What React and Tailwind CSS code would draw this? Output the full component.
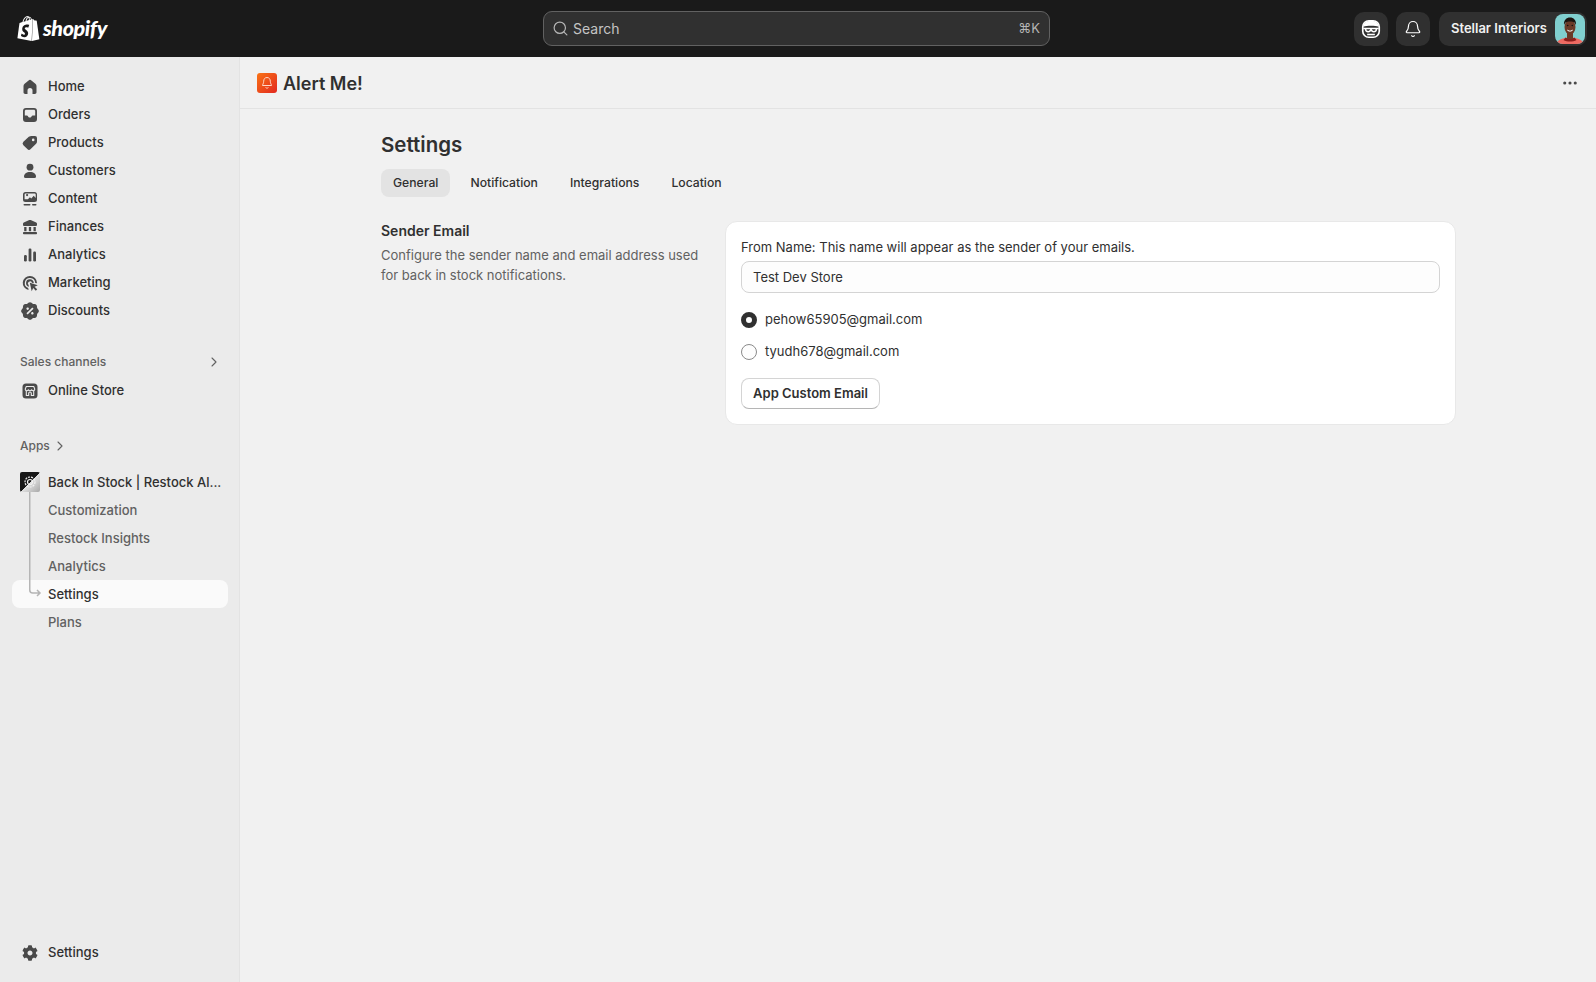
import React from "react";
import { Search, Bell, ChevronRight, MoreHorizontal } from "lucide-react";
import { FaCog } from "react-icons/fa";
import { RiDiscountPercentFill } from "react-icons/ri";

const I = ({ children, size = 20 }) => (
  <svg width={size} height={size} viewBox="0 0 20 20" fill="#4a4a4a" fillRule="evenodd">{children}</svg>
);

const icons = {
  Home: <I><path d="M8.6 3.4 4.6 6.7C3.9 7.3 3.5 8 3.5 8.9v6.4c0 1 .8 1.7 1.7 1.7h2.3v-3.5a2.5 2.5 0 0 1 5 0V17h2.3c1 0 1.7-.8 1.7-1.7V8.9c0-.9-.4-1.6-1.1-2.2l-4-3.3a2.2 2.2 0 0 0-2.8 0Z" /></I>,
  Orders: <I><path d="M6 3h8a3 3 0 0 1 3 3v8a3 3 0 0 1-3 3H6a3 3 0 0 1-3-3V6a3 3 0 0 1 3-3Zm-1.2 7.5v-4.3C4.8 5.4 5.4 4.8 6.2 4.8h7.6c.8 0 1.4.6 1.4 1.4v4.3h-2.4c-.6 0-1 .3-1.2.8l-.2.4c-.2.4-.6.7-1.1.7h-1c-.5 0-.9-.3-1.1-.7l-.2-.4c-.2-.5-.6-.8-1.2-.8H4.8Z" /></I>,
  Products: <I><path d="M11.4 3H15a2 2 0 0 1 2 2v3.6c0 .8-.3 1.6-.9 2.1l-5.4 5.4a2.4 2.4 0 0 1-3.4 0l-3.9-3.9a2.4 2.4 0 0 1 0-3.4l5.4-5C9.8 3.3 10.6 3 11.4 3Zm1.8 5.2a1.3 1.3 0 1 0 0-2.6 1.3 1.3 0 0 0 0 2.6Z" /></I>,
  Customers: <I><circle cx="10" cy="6.2" r="3.4" /><path d="M4 15.5c0-2.6 2.4-4.5 6-4.5s6 1.900 6 4.500a1.500 1.500 0 0 1-1.500 1.500h-9A1.500 1.500 0 0 1 4 15.500Z" /></I>,
  Content: <I><path d="M5.500 3h9A2.500 2.500 0 0 1 17 5.500v5a2.500 2.500 0 0 1-2.500 2.500h-9A2.500 2.500 0 0 1 3 10.500v-5A2.500 2.500 0 0 1 5.500 3Zm-.900 7.300h3.300l2-2.100 1.400 1.200 2.400-2.700 2 2.200V5.500c0-.5-.4-.9-.9-.9H5.500c-.5 0-.9.400-.9.900v4.800Zm2.500-3.100a1.100 1.100 0 1 0 0-2.200 1.100 1.100 0 0 0 0 2.200Z" /><rect x="3.500" y="15" width="7" height="1.600" rx=".8" /><rect x="12" y="15" width="4.500" height="1.600" rx=".8" /></I>,
  Finances: <I><path d="M9.300 3.100a1.800 1.800 0 0 1 1.400 0l5.500 2.500c.5.200.8.700.8 1.200V8a1 1 0 0 1-1 1H4a1 1 0 0 1-1-1V6.800c0-.5.300-1 .8-1.200l5.500-2.500Z" /><rect x="4.200" y="10" width="2.300" height="4.200" /><rect x="8.850" y="10" width="2.300" height="4.200" /><rect x="13.500" y="10" width="2.300" height="4.200" /><rect x="3" y="15" width="14" height="2.200" rx=".8" /></I>,
  Analytics: <I><rect x="4" y="10" width="2.800" height="6.500" rx="1.200" /><rect x="8.600" y="3.500" width="2.800" height="13" rx="1.200" /><rect x="13.200" y="6.500" width="2.800" height="10" rx="1.200" /></I>,
  Marketing: <I><path d="M10 3a7 7 0 0 0-1.400 13.900l-.4-1.800A5.200 5.200 0 1 1 15.200 10l1.800.300V10a7 7 0 0 0-7-7Z" /><path d="M10 6.200a3.800 3.800 0 0 0-1 7.500l-.5-1.900a2 2 0 1 1 3.400-2l1.900.5A3.800 3.800 0 0 0 10 6.200Z" /><path d="m9.800 9.800 8 2.400-3.200 1.500 2.600 2.600-1.400 1.400-2.600-2.600-1.500 3.200-1.900-8.500Z" /></I>,
  Discounts: <RiDiscountPercentFill size={20} color="#4a4a4a" />,
  "Online Store": (
    <svg width="20" height="20" viewBox="0 0 20 20" fill="none">
      <rect x="2.500" y="2.500" width="15" height="15" rx="3.500" fill="#4a4a4a" />
      <path d="M6.300 5.500h7.400l1.100 2.600c0 1-.7 1.700-1.600 1.700-.7 0-1.300-.4-1.600-1-.3.600-.9 1-1.600 1s-1.300-.4-1.600-1c-.3.600-.9 1-1.600 1-.9 0-1.600-.7-1.600-1.700l1.100-2.600Z" stroke="#ebebeb" strokeWidth="1.100" strokeLinejoin="round" />
      <path d="M6.300 10v4.500h2.400V12.300a1.300 1.300 0 0 1 2.600 0v2.200h2.400V10" stroke="#ebebeb" strokeWidth="1.100" strokeLinejoin="round" />
    </svg>
  ),
};

const mainNav = ["Home", "Orders", "Products", "Customers", "Content", "Finances", "Analytics", "Marketing", "Discounts"];
const subNav = ["Customization", "Restock Insights", "Analytics", "Settings", "Plans"];

function Row({ icon, label }) {
  return (
    <div className="h-[28px] pl-[20px] flex items-center">
      <span className="w-[20px] h-[20px] flex items-center justify-center shrink-0">{icon}</span>
      <span className="ml-[8px] text-[13px] font-[500] text-[#303030]">{label}</span>
    </div>
  );
}

function Shopify() {
  return (
    <div className="flex items-center pl-[16px] -mt-[1px]">
      <svg width="25" height="27" viewBox="0 0 24 24" fill="#ffffff">
        <path d="M15.337 23.979l7.216-1.561s-2.604-17.613-2.625-17.73c-.018-.116-.114-.192-.211-.192s-1.929-.136-1.929-.136-1.275-1.274-1.439-1.411c-.045-.037-.075-.057-.121-.074l-.914 21.104h.023zM11.71 11.305s-.81-.424-1.774-.424c-1.447 0-1.504.906-1.504 1.141 0 1.232 3.24 1.715 3.24 4.629 0 2.295-1.44 3.76-3.406 3.76-2.354 0-3.54-1.465-3.54-1.465l.646-2.086s1.245 1.066 2.28 1.066c.675 0 .975-.545.975-.932 0-1.619-2.654-1.694-2.654-4.359-.034-2.237 1.571-4.416 4.827-4.416 1.257 0 1.875.361 1.875.361l-.945 2.715-.02.01zM11.17.83c.136 0 .271.038.405.135-.984.465-2.064 1.639-2.508 3.992-.656.213-1.293.405-1.889.578C7.697 3.75 8.951.84 11.17.84V.83zm1.235 2.949v.135c-.754.232-1.583.484-2.394.736.466-1.777 1.333-2.645 2.085-2.971.193.501.309 1.176.309 2.1zm.539-2.234c.694.074 1.141.867 1.429 1.755-.349.114-.735.231-1.158.366v-.252c0-.752-.096-1.371-.271-1.871v.002zm2.992 1.289c-.02 0-.06.021-.078.021s-.289.075-.714.21c-.423-1.233-1.176-2.37-2.508-2.37h-.115C12.135.209 11.669 0 11.265 0 8.159 0 6.675 3.877 6.21 5.846c-1.194.365-2.063.636-2.16.674-.675.213-.694.232-.772.87-.075.462-1.83 14.063-1.83 14.063L15.009 24l.927-21.166z" />
      </svg>
      <span className="ml-[2px] text-[21.500px] font-black italic text-white tracking-[-0.4px] [font-family:Lato,sans-serif]">shopify</span>
    </div>
  );
}

function FaceIcon() {
  return (
    <svg width="22" height="22" viewBox="0 0 20 20" fill="none">
      <rect x="2.500" y="2.500" width="15" height="15" rx="5.500" stroke="#fff" strokeWidth="1.500" />
      <path d="M3 8C3 4.500 6 2.500 10 2.500S17 4.500 17 8c-2-.8-4-1-7-1s-5 .2-7 1Z" fill="#fff" />
      <path d="M3 9.500h14M5 9.500c0 2 1.200 3 2.500 3s2-1 2.500-2c.5 1 1.200 2 2.500 2s2.500-1 2.500-3" stroke="#fff" strokeWidth="1.400" />
      <path d="M6.500 15h7" stroke="#fff" strokeWidth="1.400" />
    </svg>
  );
}

function Avatar() {
  return (
    <svg width="30" height="30" viewBox="0 0 30 30" className="rounded-[8px] shrink-0">
      <rect width="30" height="30" fill="#80cfcf" />
      <path d="M1 30c1-4 7-6.500 14-6.500S28 26 29 30Z" fill="#ee6a62" />
      <path d="M10.500 23.500c2 1.500 7 1.500 9 0l2 2.500c-3.500 2-9.500 2-13 0Z" fill="#8c1e1c" />
      <rect x="12" y="19" width="6" height="6" fill="#6b3a28" />
      <ellipse cx="15" cy="13" rx="5.500" ry="7.500" fill="#6b3a28" />
      <path d="M9 11c-.5-5 2.500-7.500 6-7.500s6.500 2.500 6 7.500c-1-2.500-2-3.500-6-3.500s-5 1-6 3.500Z" fill="#1a1410" />
      <path d="M12 15.500c2 1.500 4 1.500 6 0-.4 2.800-5.600 2.800-6 0Z" fill="#fff" />
      <circle cx="12.700" cy="11.500" r=".8" fill="#111" />
      <circle cx="17.300" cy="11.500" r=".8" fill="#111" />
    </svg>
  );
}

function Radio({ checked, label }) {
  return (
    <div className="h-[32px] flex items-center">
      <span className={checked ? "w-[16px] h-[16px] rounded-full border-[5px] border-[#303030] bg-white" : "w-[16px] h-[16px] rounded-full border border-[#8a8a8a] bg-[#fdfdfd]"} />
      <span className="ml-[8px] text-[13px] text-[#303030]">{label}</span>
    </div>
  );
}

export default function App() {
  return (
    <div className="h-[982px] w-full flex flex-col overflow-hidden bg-[#f1f1f1] [font-family:Inter,sans-serif]">
      <header className="h-[57px] bg-[#1a1a1a] flex items-center shrink-0">
        <div className="w-[543px]"><Shopify /></div>
        <div className="w-[507px] h-[35px] bg-[#303030] border border-[#616161] rounded-[9px] flex items-center pl-[8px] pr-[9px]">
          <Search size={17} color="#b5b5b5" strokeWidth={1.7} />
          <span className="ml-[4px] text-[14px] text-[#c4c4c4]">Search</span>
          <span className="ml-auto text-[13px] text-[#b5b5b5]">⌘K</span>
        </div>
        <div className="flex-1 flex items-center justify-end pr-[9px]">
          <div className="w-[34px] h-[34px] rounded-[10px] bg-[#303030] flex items-center justify-center"><FaceIcon /></div>
          <div className="ml-[8px] w-[34px] h-[34px] rounded-[10px] bg-[#303030] flex items-center justify-center"><Bell size={18} color="#fff" strokeWidth={1.6} /></div>
          <div className="ml-[9px] h-[34px] w-[148px] rounded-[10px] bg-[#303030] flex items-center pl-[12px] pr-[2px] justify-between">
            <span className="text-[13px] font-semibold text-[#f1f1f1] whitespace-nowrap">Stellar Interiors</span>
            <Avatar />
          </div>
        </div>
      </header>

      <div className="flex-1 flex min-h-0">
        <aside className="w-[240px] shrink-0 bg-[#ebebeb] border-r border-[#e3e3e3] flex flex-col justify-between pt-[16px] pb-[15px]">
          <div>
            {mainNav.map((n) => <Row key={n} label={n} icon={icons[n]} />)}
            <div className="mt-[23px] h-[28px] pl-[20px] pr-[17px] flex items-center justify-between">
              <span className="text-[12px] font-[500] text-[#616161]">Sales channels</span>
              <ChevronRight size={16} color="#616161" strokeWidth={1.6} />
            </div>
            <div className="mt-[1px]"><Row label="Online Store" icon={icons["Online Store"]} /></div>
            <div className="mt-[27px] h-[28px] pl-[20px] flex items-center">
              <span className="text-[12px] font-[500] text-[#616161]">Apps</span>
              <ChevronRight size={16} color="#616161" strokeWidth={1.6} className="ml-[2px]" />
            </div>
            <div className="mt-[8px] relative">
              <div className="h-[28px] pl-[20px] flex items-center">
                <span className="w-[20px] h-[20px] rounded-[2px] bg-[linear-gradient(135deg,#161616_50%,#e2e2e2_50%,#a8a8a8)] flex items-center justify-center shrink-0">
                  <svg width="14" height="14" viewBox="0 0 14 14" fill="none" stroke="#f1f1f1" strokeWidth="1.200"><circle cx="7" cy="7" r="5" strokeDasharray="2 1" /><circle cx="7" cy="7" r="2.500" /></svg>
                </span>
                <span className="ml-[8px] pt-[1px] text-[13px] font-[500] text-[#303030] whitespace-nowrap">Back In Stock | Restock Al...</span>
              </div>
              {subNav.map((n) => (
                <div key={n} className={n === "Settings" ? "h-[28px] ml-[12px] mr-[11px] pl-[36px] pt-[1px] rounded-[8px] bg-[#fafafa] flex items-center" : "h-[28px] ml-[12px] mr-[11px] pl-[36px] pt-[1px] flex items-center"}>
                  <span className={n === "Settings" ? "text-[13px] font-[500] text-[#303030]" : "text-[13px] font-[450] text-[#616161]"}>{n}</span>
                </div>
              ))}
              <svg width="14" height="106" viewBox="0 0 14 106" fill="none" stroke="#b5b5b5" strokeWidth="1.500" className="absolute left-[29px] top-[24px]">
                <path d="M.75 0v98a3 3 0 0 0 3 3H11M8 98l3 3-3 3" />
              </svg>
            </div>
          </div>
          <Row label="Settings" icon={<FaCog size={16} color="#4a4a4a" />} />
        </aside>

        <main className="flex-1 min-w-0">
          <div className="h-[52px] border-b border-[#e3e3e3] pl-[17px] pr-[17px] flex items-center justify-between">
            <div className="flex items-center">
              <span className="w-[20px] h-[20px] rounded-[3px] bg-[linear-gradient(135deg,#f97316,#e2281f)] flex items-center justify-center">
                <svg width="14" height="14" viewBox="0 0 14 14" fill="none" stroke="#ffd9c9" strokeWidth="1"><path d="M7 1.500c-2.200 0-3.300 1.700-3.300 3.700 0 2.300-1.200 3.300-1.200 4.300h9c0-1-1.200-2-1.200-4.300 0-2-1.100-3.700-3.300-3.700ZM5.700 11.500c.3.900 2.300.9 2.600 0" /></svg>
              </span>
              <span className="ml-[6px] pt-[2px] text-[18px] font-semibold text-[#303030]">Alert Me!</span>
            </div>
            <MoreHorizontal size={18} color="#4a4a4a" strokeWidth={2.200} />
          </div>

          <div className="w-[1075px] ml-[141px] pt-[22px]">
            <h1 className="h-[28px] leading-[28px] text-[20.500px] font-semibold text-[#303030]">Settings</h1>
            <div className="mt-[10px] flex items-center gap-[8px]">
              <span className="h-[28px] px-[12px] rounded-[8px] bg-[#e3e3e3] flex items-center text-[12.200px] font-[500] text-[#303030]">General</span>
              <span className="h-[28px] px-[12px] flex items-center text-[12.200px] font-[500] text-[#303030]">Notification</span>
              <span className="h-[28px] px-[12px] flex items-center text-[12.200px] font-[500] text-[#303030]">Integrations</span>
              <span className="h-[28px] px-[12px] flex items-center text-[12.200px] font-[500] text-[#303030]">Location</span>
            </div>
            <div className="mt-[24px] flex items-start justify-between">
              <div className="w-[325px]">
                <div className="h-[20px] leading-[20px] text-[14px] font-semibold text-[#303030]">Sender Email</div>
                <p className="mt-[4px] text-[13px] leading-[20px] text-[#616161]">Configure the sender name and email address used for back in stock notifications.</p>
              </div>
              <section className="w-[731px] rounded-[12px] bg-white border border-[#e8e8e8] px-[15px] pt-[16px] pb-[15px]">
                <div className="h-[18px] leading-[18px] text-[13px] text-[#303030]">From Name: This name will appear as the sender of your emails.</div>
                <div className="mt-[5px] h-[32px] rounded-[8px] border border-[#d4d4d4] bg-[#fdfdfd] pl-[11px] pt-[1px] flex items-center text-[13px] text-[#303030]">Test Dev Store</div>
                <div className="mt-[11px]">
                  <Radio checked label="pehow65905@gmail.com" />
                  <Radio label="tyudh678@gmail.com" />
                </div>
                <div className="mt-[10px] h-[31px] w-[139px] rounded-[8px] border border-[#d4d4d4] border-b-[#b5b5b5] bg-white flex items-center justify-center text-[13px] font-semibold text-[#303030]">App Custom Email</div>
              </section>
            </div>
          </div>
        </main>
      </div>
    </div>
  );
}
